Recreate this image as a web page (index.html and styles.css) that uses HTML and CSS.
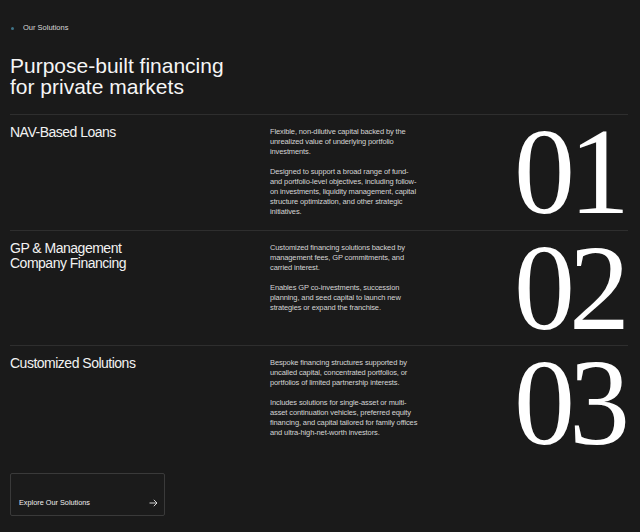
FILE: index.html
```html
<!DOCTYPE html>
<html lang="en">
<head>
<meta charset="utf-8">
<title>Our Solutions</title>
<link rel="stylesheet" href="styles.css">
</head>
<body>
<main class="page">
  <div class="eyebrow"><span class="dot"></span>Our Solutions</div>
  <h1 class="headline">Purpose-built financing<br>for private markets</h1>
  <ul class="list">
    <li class="item">
      <h2 class="item-title">NAV-Based Loans</h2>
      <div class="item-desc">
        <p>Flexible, non-dilutive capital backed by the unrealized value of underlying portfolio investments.</p>
        <p>Designed to support a broad range of fund- and portfolio-level objectives, including follow-on investments, liquidity management, capital structure optimization, and other strategic initiatives.</p>
      </div>
      <div class="item-num">01</div>
    </li>
    <li class="item">
      <h2 class="item-title">GP &amp; Management<br>Company Financing</h2>
      <div class="item-desc">
        <p>Customized financing solutions backed by management fees, GP commitments, and carried interest.</p>
        <p>Enables GP co-investments, succession planning, and seed capital to launch new strategies or expand the franchise.</p>
      </div>
      <div class="item-num">02</div>
    </li>
    <li class="item">
      <h2 class="item-title">Customized Solutions</h2>
      <div class="item-desc">
        <p>Bespoke financing structures supported by uncalled capital, concentrated portfolios, or portfolios of limited partnership interests.</p>
        <p>Includes solutions for single-asset or multi-asset continuation vehicles, preferred equity financing, and capital tailored for family offices and ultra-high-net-worth investors.</p>
      </div>
      <div class="item-num">03</div>
    </li>
  </ul>
  <a class="cta" href="#">
    <span class="cta-label">Explore Our Solutions</span>
    <svg class="cta-arrow" width="9" height="8" viewBox="0 0 9 8" fill="none" stroke="#e6e6e6" stroke-width="0.9"><path d="M0.5 4H8M4.8 0.8L8 4L4.8 7.2"/></svg>
  </a>
</main>
</body>
</html>
```
FILE: styles.css
```css
html, body {
  margin: 0;
  padding: 0;
  background: #1a1a1a;
}
body {
  font-family: "Liberation Sans", Arial, sans-serif;
  color: #f2f2f2;
  width: 640px;
  height: 532px;
  overflow: hidden;
}
.page {
  padding: 23px 12px 0 10px;
}
.eyebrow {
  display: flex;
  align-items: center;
  font-size: 7.5px;
  line-height: 10px;
  color: #d8d8d8;
}
.dot {
  width: 3px;
  height: 3px;
  border-radius: 50%;
  background: #3f7488;
  margin: 0 9px 0 1px;
}
.headline {
  margin: 22px 0 0;
  font-weight: 400;
  font-size: 21px;
  line-height: 21px;
  color: #f5f5f5;
}
.list {
  list-style: none;
  margin: 17px 0 0;
  padding: 0;
}
.item {
  display: grid;
  grid-template-columns: 260px 152px 1fr;
  border-top: 1px solid #2e2e2e;
  padding: 12px 0 13px;
}
.item-title {
  margin: -2px 0 0;
  font-weight: 400;
  font-size: 14px;
  line-height: 15px;
  letter-spacing: -0.5px;
  color: #f2f2f2;
}
.item-desc {
  font-size: 7.5px;
  line-height: 10px;
  letter-spacing: -0.12px;
  color: #d4d4d4;
}
.item-desc p {
  margin: 0 0 10px;
}
.item-desc p:last-child {
  margin-bottom: 0;
}
.item-num {
  font-family: "Liberation Serif", "Times New Roman", serif;
  font-size: 122px;
  line-height: 0.73;
  letter-spacing: -6px;
  text-align: right;
  color: #ffffff;
  margin-right: 4px;
}
.cta {
  display: flex;
  justify-content: space-between;
  align-items: flex-end;
  width: 155px;
  height: 43px;
  box-sizing: border-box;
  margin-top: 13px;
  padding: 0 6px 7px 8px;
  border: 1px solid #3a3a3a;
  border-radius: 2px;
  background: #1b1b1b;
  text-decoration: none;
  color: #efefef;
  font-size: 7.3px;
  line-height: 10px;
}
.cta-arrow {
  margin-bottom: 1px;
}
```
